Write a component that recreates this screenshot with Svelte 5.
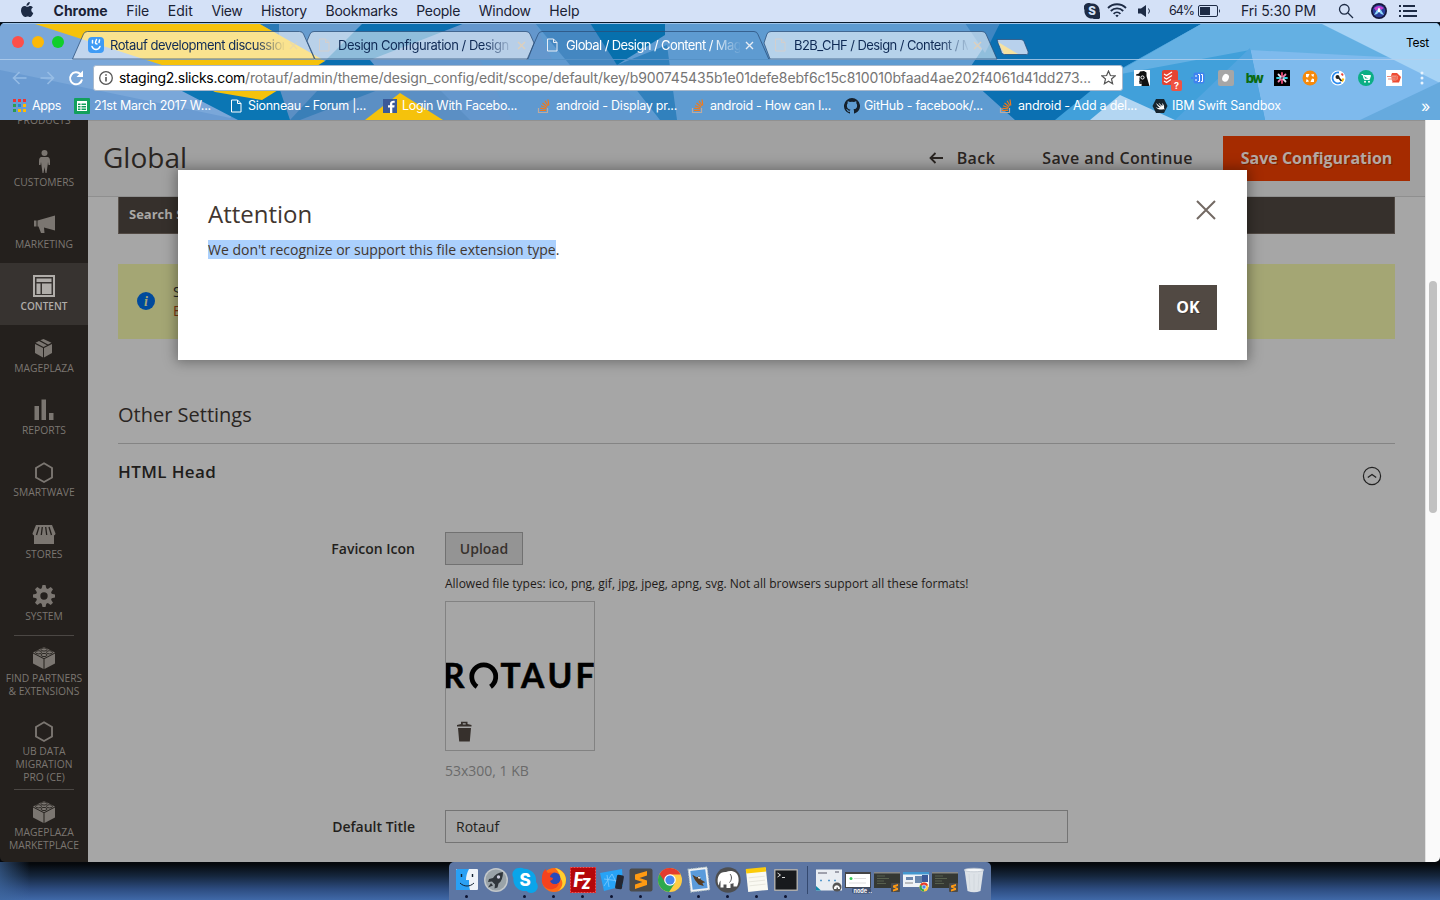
<script>
  function fit(node, width) {
    const n = node.textContent.length;
    const natural = node.getBoundingClientRect().width;
    node.style.letterSpacing = (width - natural) / n + 'px';
  }

  const menus = [['Chrome', 54], ['File', 23], ['Edit', 25], ['View', 31], ['History', 46], ['Bookmarks', 72], ['People', 44], ['Window', 52], ['Help', 30]];
  const tabs = [
    { t: 'Rotauf development discussion', w: 179, icon: 'smile' },
    { t: 'Design Configuration / Design /', w: 178, icon: 'doc' },
    { t: 'Global / Design / Content / Mage', w: 182, icon: 'doc', active: true },
    { t: 'B2B_CHF / Design / Content / M', w: 179, icon: 'doc' }
  ];
  const marks = [
    ['sheet', '21st March 2017 W...', 117], ['doc', 'Sionneau - Forum |...', 118], ['fb', 'Login With Facebo...', 115],
    ['so', 'android - Display pr...', 121], ['so', 'android - How can I...', 121], ['gh', 'GitHub - facebook/...', 119],
    ['so', 'android - Add a del...', 119], ['swift', 'IBM Swift Sandbox', 109]
  ];
  const exts = ['ghost', 'todo', 'brace', 'grey', 'bw', 'slack', 'orange', 'ring', 'cart', 'dash'];
  const nav = [
    { l: ['CUSTOMERS'], i: 'person' }, { l: ['MARKETING'], i: 'horn' }, { l: ['CONTENT'], i: 'layout', on: true },
    { l: ['MAGEPLAZA'], i: 'box' }, { l: ['REPORTS'], i: 'bars' }, { l: ['SMARTWAVE'], i: 'hex' },
    { l: ['STORES'], i: 'store' }, { l: ['SYSTEM'], i: 'gear' },
    { l: ['FIND PARTNERS', '& EXTENSIONS'], i: 'brick', line: true, h: 73 },
    { l: ['UB DATA', 'MIGRATION', 'PRO (CE)'], i: 'hex', h: 81 },
    { l: ['MAGEPLAZA', 'MARKETPLACE'], i: 'brick', line: true, h: 73 }
  ];
  const dock = ['finder', 'rocket', 'skype', 'firefox', 'filezilla', 'xcode', 'sublime', 'chrome', 'mail', 'mamp', 'notes', 'term'];
  const mini = ['win1', 'win2', 'win3', 'win4', 'win5', 'trash'];
  const dotless = ['rocket'];
</script>

{#snippet small(name)}
  <svg class="ic16" viewBox="0 0 16 16" width="16" height="16">
    {#if name === 'smile'}
      <rect width="16" height="16" rx="4" fill="#3f9bf5" /><path d="M4.500 3.500v2.500M8.500 2.500c-1.500 3-1.500 4.500.5 4.500M11.500 3l-.5 2.500M4 9.500c1.500 4 6.500 4 8 0" stroke="#fff" stroke-width="1.500" fill="none" stroke-linecap="round" />
    {:else if name === 'doc'}
      <path d="M3.500 2h6l3.500 3.500v8.500h-9.500zM9.500 2v3.500H13" fill="none" stroke="currentColor" stroke-width="1" />
    {:else if name === 'sheet'}
      <rect width="16" height="16" rx="1" fill="#12a05c" /><rect x="3" y="3" width="10" height="10" fill="#fff" /><path d="M4 6.300h2.500M7.500 6.300h4.500M4 8.800h2.500M7.500 8.800h4.500M4 11.300h2.500M7.500 11.300h4.500" stroke="#12a05c" stroke-width="1.500" />
    {:else if name === 'fb'}
      <rect x="1" y="1" width="14" height="14" fill="#3b5998" /><path d="M10.300 15V9.500h2l.3-2.300h-2.300V6c0-.8.3-1.200 1.200-1.200h1.200V2.700C10 2.400 8 3.200 8 5.700v1.500H6v2.300h2V15z" fill="#fff" />
    {:else if name === 'so'}
      <path d="M2.500 10v4.500h9V10" fill="none" stroke="#bcaaa0" stroke-width="1.200" /><path d="M4 12.500h6M4.200 10.300l6 .6M5 7.800l5.500 2M6.500 5l4.600 3.800M9 2.800l3 5M12 1.500l.8 6" stroke="#ee7a1c" stroke-width="1.200" />
    {:else if name === 'gh'}
      <path fill="#15202b" d="M8 0a8 8 0 0 0-2.500 15.600c.4 0 .5-.2.5-.4v-1.500c-2.200.5-2.700-1-2.700-1-.4-.9-.9-1.200-.9-1.200-.7-.5.1-.5.100-.5.800.1 1.200.8 1.200.8.700 1.300 1.900.9 2.300.7.100-.5.300-.9.500-1.100-1.800-.2-3.600-.9-3.600-4 0-.9.300-1.600.8-2.100 0-.2-.3-1 .1-2.100 0 0 .7-.2 2.200.8a7.500 7.500 0 0 1 4 0c1.500-1 2.200-.8 2.200-.8.400 1.100.1 1.900.1 2.100.5.600.8 1.300.8 2.200 0 3.100-1.900 3.700-3.700 3.900.300.3.600.800.600 1.500v2.300c0 .2.100.5.500.4A8 8 0 0 0 8 0z" />
    {:else if name === 'swift'}
      <path d="M4 1h8l3.500 7-3.500 7H4L.5 8z" fill="#16252f" /><path d="M4 5c2 2 4 3.200 5.500 3.800C8.500 7.800 7 6 6.500 4.800 8.500 6.500 9.500 7.300 10.500 8c.2-1 0-2-.7-3 2 1.300 2.700 3.300 2.200 5 .5.600.6 1.200.4 1.700-.6-.8-1.300-.5-2-.3C8 12 5 11 3.700 9c1.500 1 3 1.200 4 .8C6.200 8.500 5 7 4 5z" fill="#fff" />
    {:else if name === 'ghost'}
      <rect width="16" height="16" fill="#fff" /><path d="M2 4.500l3-1 1-2 4-.5 2.500 1.500V6l3 10H7.500L8 11H5.500V8L6 6 2 5.500z" fill="#111" /><circle cx="8.500" cy="7.500" r="1.600" fill="none" stroke="#fff" /><path d="M5 11h3v3H5.500z" fill="#333" />
    {:else if name === 'todo'}
      <rect width="16" height="15" rx="2" fill="#e44332" /><path d="M2 4l2.500 1.500L10 2M2 7.500L4.500 9 10 5.500M2 11l2.500 1.500L9 9.500" stroke="#fff" fill="none" stroke-width="1.200" />
    {:else if name === 'brace'}
      <rect x="3.500" y="2.500" width="11" height="11" rx="2" fill="#3f83f0" /><path d="M1 8h2" stroke="#3f83f0" stroke-width="2" /><path d="M6 5v2M6 9v2M8 4.500h1.500v7H8M11 4.500h1.500v7H11" stroke="#fff" fill="none" />
    {:else if name === 'grey'}
      <rect width="16" height="16" rx="2" fill="#a6a6a6" /><ellipse cx="7.500" cy="8" rx="3.200" ry="4" fill="#fff" transform="rotate(25 8 8)" />
    {:else if name === 'slack'}
      <rect width="16" height="16" fill="#000" /><g stroke-width="1.800" stroke-linecap="round"><path d="M8 3v3.500M8 9.500V13" stroke="#ec4c78" /><path d="M3 8h3.500M9.500 8H13" stroke="#33d0e0" /><path d="M4.500 4.500l2.300 2.300M9.200 9.200l2.300 2.300" stroke="#e5e0ee" /><path d="M11.500 4.500L9.200 6.800M6.800 9.200l-2.300 2.300" stroke="#ef7fb1" /></g>
    {:else if name === 'orange'}
      <circle cx="8" cy="8" r="7.500" fill="#f58a0c" /><g fill="#fff"><path d="M4 4h3.500L6 7.500 4 7zM12 12H8.500L10 8.500l2 .5zM9 4.500l3-.5-.5 3-1.500-1zM7 11.500L4 12l.5-3L6 10z" /></g>
    {:else if name === 'ring'}
      <circle cx="8" cy="8" r="7.500" fill="#fff" /><path d="M9 2.500a5.500 5.500 0 1 0 2 10" fill="none" stroke="#2c8cf0" stroke-width="1.800" /><path d="M11.500 3.500l1.500 2" stroke="#e94335" stroke-width="1.800" /><path d="M13.500 8.500l-1.500 3" stroke="#fbbc05" stroke-width="2" /><circle cx="7.500" cy="7" r="2" fill="#222" /><path d="M8 7l3.500 4" stroke="#222" stroke-width="1.800" />
    {:else if name === 'cart'}
      <circle cx="8" cy="8" r="8" fill="#0cae84" /><path d="M3.500 4.500h1.500l1.500 5h5M5.500 5.500h7l-1 3.500h-5z" stroke="#fff" fill="#fff" stroke-width="1" /><circle cx="7" cy="11.700" r="1" fill="#fff" /><circle cx="11" cy="11.700" r="1" fill="#fff" />
    {:else if name === 'dash'}
      <rect width="16" height="16" fill="#fff" /><path d="M6 3h5l4 4-2 5.500H6l1-2.500h4l1-3-1.500-1.500H5z" fill="#ee4b33" /><path d="M5 5h6l1 3-2 3H6z" fill="#f0705a" /><path d="M1 6.500h9M2 9h7" stroke="#ee8a78" stroke-width="1.200" />
    {/if}
  </svg>
{/snippet}

{#snippet side(name)}
  <svg viewBox="0 0 24 24" width="24" height="24" fill="currentColor">
    {#if name === 'person'}
      <circle cx="12.500" cy="3" r="3" /><path d="M9.500 7h6c1.500 0 2.500 1.500 2.500 4v4h-1.500l-.5-3-.2 2L14.500 23h-1l-1-6-1 6h-1L9.300 14 9 12l-.5 3H7v-4c0-2.500 1-4 2.500-4z" />
    {:else if name === 'horn'}
      <path d="M2 8.500h2.500v6H2zM5.500 8.500L23 3.500v15L12 15.500l.5 5.500H9l-2.500-6.500h-1z" />
    {:else if name === 'layout'}
      <path fill-rule="evenodd" d="M1 1h22v22H1zM3 3v18h18V3z" /><path d="M4.500 4.500h15v3.500h-15zM4.500 9.500h4V20h-4zM10 9.500h9.500V20H10z" />
    {:else if name === 'box'}
      <path d="M3 8l8 4v9.500l-8-4.500zM20 8l-8 4v9.500l8-4.500zM3.500 6.800L7 5l8 4.200-3.500 1.700zM8.300 4.300L11.500 3l8 3.800L16 8.500z" />
    {:else if name === 'bars'}
      <path d="M2.500 8h4.500v14H2.500zM9.500 1.500H14V22H9.500zM17 15h4.500v7H17z" />
    {:else if name === 'hex'}
      <path d="M12 3.300l8 4.700v9.500L12 22l-8-4.500V8z" fill="none" stroke="currentColor" stroke-width="1.900" />
    {:else if name === 'store'}
      <path d="M2 13h20v9H2z" /><path d="M4 3h16l3.500 8.500c0 1.300-1 2-2 2h-19c-1 0-2-.7-2-2z" /><path d="M7 5l-2.500 8M10.300 5l-1 8M13.700 5l1 8M17 5l2.500 8" stroke="#24201d" stroke-width="1.300" />
    {:else if name === 'gear'}
      <path fill-rule="evenodd" d="M10.500 1h3l.8 3.300 1.500.6L18.700 3 21 5.300l-1.900 2.900.6 1.500L23 10.500v3l-3.300.8-.6 1.500 1.900 2.900-2.300 2.300-2.900-1.900-1.500.6-.8 3.300h-3l-.8-3.300-1.500-.6L5.300 21 3 18.700l1.900-2.900-.6-1.500L1 13.500v-3l3.300-.8.6-1.500L3 5.300 5.300 3l2.900 1.900 1.500-.6zM12 8.300a3.700 3.700 0 1 0 0 7.400 3.700 3.700 0 0 0 0-7.400z" />
    {:else if name === 'brick'}
      <path d="M1 7.500l10.500 5.500v10L1 17.500zM23 7.500L12.500 13v10L23 17.500zM12 1l11 5.500-11 5.700L1 6.500z" /><g fill="currentColor" stroke="#24201d" stroke-width=".9"><ellipse cx="12" cy="3.500" rx="3" ry="1.600" /><ellipse cx="6.500" cy="6.300" rx="3" ry="1.600" /><ellipse cx="17.500" cy="6.300" rx="3" ry="1.600" /><ellipse cx="12" cy="9" rx="3" ry="1.600" /></g>
    {/if}
  </svg>
{/snippet}

{#snippet app(name)}
  <svg viewBox="0 0 28 28" width="28" height="28">
    {#if name === 'finder'}
      <rect x="3" y="3" width="22" height="21" rx="1" fill="#eef3f8" /><path d="M4 3h12c-2 4-3 7-3 11h3c0 4 0 7 1 10H3V4z" fill="#2aa0f4" /><path d="M8.500 8v3M19.500 8v3" stroke="#123" stroke-width="1.400" /><path d="M7 17c4 4 10 4 14 0" stroke="#123" fill="none" />
    {:else if name === 'rocket'}
      <circle cx="14" cy="14" r="12" fill="#c3c8cb" /><circle cx="14" cy="14" r="10.500" fill="#9aa3a8" /><path d="M21 6c-5 .5-8 3-10 6l-4 1-1 3 4-.5 3 3-.5 4 3-1 1-4c3-2 4.500-6 4.500-11.500zM9 17l-3 4.500 5-2z" fill="#30363b" /><circle cx="16.500" cy="11" r="1.700" fill="#ccd" />
    {:else if name === 'skype'}
      <path d="M8 2a7 7 0 0 1 5 .8A11.500 11.500 0 0 1 25 16a6.500 6.500 0 0 1-9.500 9A11.500 11.500 0 0 1 2.500 12 6.500 6.500 0 0 1 8 2z" fill="#0aa5ea" /><text x="14" y="20" text-anchor="middle" font-family="Inter, sans-serif" font-size="17" font-weight="800" fill="#fff">S</text>
    {:else if name === 'firefox'}
      <circle cx="14" cy="14" r="12" fill="#ff6a17" /><path d="M15 2c6 1 11 6 11 12a12 12 0 0 1-8 11c6-5 5-10 2-13 0-4-2-7-5-10z" fill="#ffd02f" /><circle cx="14.500" cy="12.500" r="6" fill="#2b4ab8" /><path d="M2 12C2 7 4 4 6 3c0 2 1 3 2 4 2-1 4-.5 5 0-2 1-3 3-3 4l3 1c0 2-2 2.500-3 3 2 4 6 4 9 2-1 5-6 7-10 6-5-1-8-6-7-11z" fill="#f5421e" />
    {:else if name === 'filezilla'}
      <rect x="1" y="1" width="26" height="26" fill="#b5070a" /><rect x="1.500" y="1.500" width="25" height="25" fill="none" stroke="#e55" stroke-dasharray="2 1" /><text x="4" y="21" font-family="Lato, sans-serif" font-size="21" font-weight="900" font-style="italic" fill="#fff">F</text><text x="13" y="23" font-family="Lato, sans-serif" font-size="20" font-weight="900" font-style="italic" fill="#fff">z</text>
    {:else if name === 'xcode'}
      <path d="M2 7l22-4 1 17-19 5z" fill="#27a3f6" /><path d="M6 20l8-12 6 12M6 13l15 2M9 9l2 12" stroke="#7fcaff" fill="none" stroke-width=".8" /><rect x="18" y="9" width="7" height="14" rx="1.500" fill="#232630" transform="rotate(10 21 16)" />
    {:else if name === 'sublime'}
      <rect x="2.500" y="2.500" width="23" height="23" rx="2" fill="#4b4b4b" /><path d="M8 8.500L20 5v4.500L12.500 12 20 14.500V19L8 23v-4.500l7.500-2.500L8 13.500z" fill="#ff9a12" />
    {:else if name === 'chrome'}
      <circle cx="14" cy="14" r="12" fill="#fc4" /><path d="M14 14L3.600 8A12 12 0 0 0 13 26l6-9z" fill="#2da94f" /><path d="M14 8.500h10.600A12 12 0 0 0 3.600 8L9 16z" fill="#e33b2e" /><circle cx="14" cy="14" r="5.800" fill="#fff" /><circle cx="14" cy="14" r="4.600" fill="#4787ee" />
    {:else if name === 'mail'}
      <g transform="rotate(-7 14 14)"><rect x="4.500" y="2" width="19" height="23" fill="#f2f3f5" stroke="#bcc" stroke-dasharray="1.500 1" /><rect x="6.500" y="4" width="15" height="19" fill="#5a9bdb" /><path d="M8 8l4 3 2.500-1 1.500 4 4 3-3 .5 1 3-5-2-3-5z" fill="#553c22" /><path d="M13 10l3 2-2 1z" fill="#fff" /></g>
    {:else if name === 'mamp'}
      <circle cx="14" cy="14" r="12.700" fill="#4d4e50" /><path d="M4 18c-1.500-8 2-12.500 8-12 5-2.500 12-.5 12.500 6 .5 4-.5 6-1.500 8.500h-3.500V17c-1 .7-2 .8-3 .8V22h-4v-3.500H9.500v3H6.500v-7c-1 1-1.500 3-1.500 5z" fill="#fff" /><path d="M16 8c2 2 2 6-.5 8.500" stroke="#4d4e50" fill="none" />
    {:else if name === 'notes'}
      <g transform="rotate(-6 14 14)"><rect x="4" y="3" width="20" height="22" fill="#faf9f2" /><rect x="4" y="2" width="20" height="4.500" fill="#fccb0a" /><path d="M6 11h16M6 15h16M6 19h16" stroke="#e0ded4" stroke-width=".7" /></g>
    {:else if name === 'term'}
      <rect x="2" y="3" width="24" height="22" rx="1" fill="#aaa" /><rect x="3.500" y="4.500" width="21" height="19" fill="#181a1d" /><path d="M5.500 7l3 2-3 2M10 11.500h3" stroke="#ddd" fill="none" />
    {:else if name === 'win1'}
      <rect x="1" y="3.500" width="26" height="21" fill="#e9edf2" /><path d="M3 7h9M20 6h4" stroke="#556" /><path d="M5 14.500h2M13 14.500h2M19 14.500h2" stroke="#59c" stroke-width="1.500" /><path d="M1 20l5 4.500H1z" fill="#18a" /><circle cx="22" cy="21" r="4.500" fill="#555" /><path d="M19 23c-.5-5 6-5 6 0h-2v-1.500h-1.500V23z" fill="#fff" />
    {:else if name === 'win2'}
      <rect x="1" y="6" width="26" height="16" fill="#444" /><rect x="2" y="8" width="24" height="13" fill="#fff" /><circle cx="7" cy="12.500" r="1.500" fill="#3c5" /><path d="M10 12.500h12M5 17h17" stroke="#ddd" /><rect x="8" y="21.500" width="19" height="6" rx="2" fill="#425273" /><text x="9.500" y="26.500" font-family="Inter, sans-serif" font-size="5.500" font-weight="700" fill="#fff">node ...</text>
    {:else if name === 'win3' || name === 'win5'}
      <rect x="1" y="6" width="26" height="16" fill="#353833" /><rect x="1" y="6" width="26" height="1.500" fill="#888" /><path d="M4 10h8M4 12.500h12M4 15h7M4 17.500h9" stroke="#66715a" stroke-width=".7" /><rect x="18" y="17" width="9" height="9" rx="1" fill="#4b4b4b" /><path d="M20 19.500l5-1.500v2l-3 1 3 1v2l-5 1.500v-2l3-1-3-1z" fill="#ff9a12" />
    {:else if name === 'win4'}
      <rect x="1" y="6" width="26" height="15" fill="#eef2f7" /><rect x="1" y="6" width="26" height="2.500" fill="#4297d0" /><path d="M4 11h7v3H4zM13 10h7v7h-7z" fill="#6886ad" /><path d="M3 17h8" stroke="#888" /><rect x="20" y="9" width="6" height="7" fill="#3b5998" /><circle cx="22" cy="21" r="4.500" fill="#fc4" /><path d="M22 21l-4-2a4.500 4.500 0 0 1 8 0z" fill="#e33b2e" /><path d="M22 21l-4-2a4.500 4.500 0 0 0 4 6.500z" fill="#2da94f" /><circle cx="22" cy="21" r="2" fill="#4787ee" stroke="#fff" stroke-width=".6" />
    {:else if name === 'trash'}
      <path d="M4.500 3.500h19L20.500 25q-6.500 2.500-13 0z" fill="#dde2e7" /><ellipse cx="14" cy="4" rx="9.700" ry="1.800" fill="#f4f6f8" stroke="#b9c2cc" stroke-width=".7" /><path d="M9 8l1 16M14 8v16M19 8l-1 16" stroke="#cfd6dc" stroke-width=".8" />
    {/if}
  </svg>
{/snippet}

<div class="desktop">
  <div class="menubar">
    <svg class="apple" viewBox="0 0 14 16" width="14" height="16"><path fill="#1d2b45" d="M9.800 0c.1 1-.3 2-.9 2.700-.6.700-1.500 1.200-2.400 1.100-.1-1 .3-2 .9-2.600C8 .5 9 .1 9.800 0zM12.900 5.400c-1 .6-1.600 1.500-1.600 2.600 0 1.300.7 2.400 2 2.900-.7 2-2 4-3.300 4-.9 0-1.200-.5-2.300-.5s-1.500.5-2.300.5C3.500 15 1 11.500 1 8.400 1 5.500 2.900 4 4.600 4c1.100 0 2 .8 2.800.8.700 0 1.700-.8 3-.8.500 0 1.800.1 2.500 1.400z" /></svg>
    {#each menus as [m, w], i}
      <span class:strong={i === 0} use:fit={w}>{m}</span>
    {/each}
    <div class="status">
      <svg width="16" height="16" viewBox="0 0 16 16"><path d="M4 0a5 5 0 0 1 3 .5A7.500 7.500 0 0 1 15.500 9 4.500 4.500 0 0 1 9 15.500 7.500 7.500 0 0 1 .5 7 4.500 4.500 0 0 1 4 0z" fill="#1d2b45" /><text x="8" y="12" text-anchor="middle" font-size="11.500" font-weight="800" fill="#d5e2f7">S</text></svg>
      <svg class="wifi" width="20" height="15" viewBox="0 0 20 15" fill="none" stroke="#1d2b45" stroke-width="1.800"><path d="M1 5c5-5 13-5 18 0M3.800 8c3.500-3.500 9-3.500 12.400 0M6.600 10.800c2-2 4.800-2 6.800 0" /><path d="M8.300 12.500L10 14.300l1.700-1.800q-1.700-1.300-3.400 0z" fill="#1d2b45" stroke="none" /></svg>
      <svg class="vol" width="14" height="12" viewBox="0 0 14 12"><path d="M0 3.500h3L8 0v12L3 8.500H0z" fill="#1d2b45" /><path d="M10.500 3.500q2 2.500 0 5" stroke="#1d2b45" fill="none" /></svg>
      <span class="pct" use:fit={25}>64%</span>
      <svg class="bat" width="23" height="12" viewBox="0 0 23 12"><rect x=".5" y=".5" width="19" height="11" rx="1.500" fill="none" stroke="#1d2b45" /><rect x="2" y="2" width="10" height="8" fill="#1d2b45" /><path d="M21 4q2 2 0 4z" fill="#1d2b45" /></svg>
      <span class="clock" use:fit={75}>Fri 5:30 PM</span>
      <svg class="find" width="16" height="16" viewBox="0 0 16 16" fill="none" stroke="#1d2b45" stroke-width="1.300"><circle cx="6.300" cy="6.300" r="4.800" /><path d="M10 10l5 5" /></svg>
      <svg class="siri" width="16" height="16" viewBox="0 0 16 16"><circle cx="8" cy="8" r="8" fill="#15173c" /><circle cx="8" cy="8" r="6.300" fill="#2b3f9b" /><path d="M3 5q5-4 10 0l-3 2-2-2-3 3z" fill="#c23fd0" /><path d="M3 12l3-5 2-2 2 2 3 5-3-1-2-2-2 2z" fill="#8fd8fa" /><path d="M7 6l1-1.500L9 6v3H7z" fill="#fff" /></svg>
      <svg class="list" width="18" height="12" viewBox="0 0 18 12" stroke="#1d2b45" stroke-width="1.800"><path d="M0 1h2M4 1h12M0 6h2M4 6h14M0 11h2M4 11h14" /></svg>
    </div>
  </div>

  <div class="window">
    <div class="chrome">
      <svg class="art" viewBox="0 23 1440 97" width="1440" height="97">
        <rect y="23" width="1440" height="97" fill="#5e9bd1" />
        <path d="M0 23h260L230 120H0z" fill="#7aa7d9" />
        <path d="M0 120V70l240 50z" fill="#6a9bd2" />
        <path d="M258 23h21v38l46 0z" fill="#2a79b5" />
        <path d="M279 23h84l-38 38-46-12z" fill="#679ccf" />
        <path d="M363 23h105L385 66h-72l12-5z" fill="#0b6fb0" />
        <path d="M465 23h70l45 97H420l-50-60z" fill="#6497cd" />
        <path d="M180 90h200l-60 30h-82z" fill="#0b76b4" />
        <path d="M280 90h160l30 30h-180z" fill="#5b8fc4" />
        <path d="M318 90h60l-78 30h-10z" fill="#3a7fb8" />
        <path d="M480 60l110 0 70 60H512z" fill="#5f99d0" />
        <path d="M535 23h55l30 42-50 0z" fill="#4487c1" />
        <path d="M590 23h75v12l-48 30z" fill="#0770ad" />
        <path d="M617 65l50-20 10 75h-17z" fill="#3181bd" />
        <path d="M32 23h226l67 38-63 39-47-8-50-26z" fill="#f5c20c" />
        <path d="M365 120l35-27 43 27z" fill="#f5c20c" />
        <path d="M1000 23h203l-93 52-50 45h-45l-50-45z" fill="#0b70b2" />
        <path d="M965 23h35l-15 30z" fill="#3f86c2" />
        <path d="M1203 23h47l15 97H1055l55-45z" fill="#41a0da" />
        <path d="M1250 48l190-10v82h-175z" fill="#7ebaed" />
        <path d="M1203 23h117l120 37-190-10-140 26z" fill="#64b0e3" />
        <path d="M1250 48l15 72h-90z" fill="#52a5df" />
        <path d="M1320 23h120v60z" fill="#a6d3f5" />
        <path d="M1360 120l80-38v38z" fill="#66aade" />
        <path d="M1090 120l30-25 55 25z" fill="#b3d6f2" />
        <path d="M0 23.500h1440" stroke="#9dc3e8" />
        <path d="M0 59.500H1440" stroke="#b4d0ec" stroke-opacity=".8" />
        <g stroke="#2a4e78" stroke-opacity=".75">
          <path d="M72.500 59l11-25q1-2.500 4-2.500h212q3 0 4 2.500l11 25z" fill="#fff" fill-opacity=".54" />
          <path d="M315 59l-8-18 3-7q1-2.500 4-2.500h212q3 0 4 2.500l4 9-6 16z" fill="#fff" fill-opacity=".54" />
          <path d="M764 43l3-9q1-2.500 4-2.500h211q3 0 4 2.500l11 25H770z" fill="#fff" fill-opacity=".55" />
          <path d="M527 59.500l11-25q1-3 4-3h212q3 0 4 3l11 25" fill="none" />
          <path d="M997 39.500h24q2 0 3 2l4 10q1 3-1.500 3h-22q-2 0-3-2z" fill="#b8d1ec" />
        </g>
        <path d="M528 59.500h242" stroke="#5591c6" />
        <path d="M998 42l20 12h-14z" fill="#f7e2a0" />
      </svg>
      <div class="tabrow">
        <div class="lights"><i class="r"></i><i class="y"></i><i class="g"></i></div>
        {#each tabs as t}
          <div class="tab" class:active={t.active}>
            {@render small(t.icon)}
            <span class="clip"><span use:fit={t.w}>{t.t}</span></span>
            <svg class="x" width="9" height="9" viewBox="0 0 9 9"><path d="M1 1l7 7M8 1L1 8" stroke="currentColor" stroke-width="1.400" /></svg>
          </div>
        {/each}
        <span class="profile" use:fit={23}>Test</span>
      </div>
      <div class="toolbar">
        <svg class="arrows" width="80" height="18" viewBox="0 0 80 18" fill="none" stroke-width="1.600"><path d="M15 9H2M8 3L2 9l6 6M29 9h13M36 3l6 6-6 6" stroke="#9fc3e8" stroke-opacity=".8" /><g transform="translate(-3 0)"><path d="M72 5.200A6 6 0 1 0 73.500 10.500" stroke="#fff" stroke-width="2" /><path d="M68 8h6.500V1.500z" fill="#fff" /></g></svg>
        <div class="url">
          <svg width="14" height="14" viewBox="0 0 14 14" fill="none" stroke="#555"><circle cx="7" cy="7" r="6.300" stroke-width="1.300" /><path d="M7 6v4.500M7 3.300v1.500" stroke-width="1.600" /></svg>
          <span class="host" use:fit={126}>staging2.slicks.com</span><span class="path" use:fit={846}>/rotauf/admin/theme/design_config/edit/scope/default/key/b900745435b1e01defe8ebf6c15c810010bfaad4ae202f4061d41dd273...</span>
          <svg class="star" width="15" height="15" viewBox="0 0 15 15"><path d="M7.500 1l1.900 4.500 4.700.4-3.600 3.100 1.100 4.700-4.100-2.500-4.100 2.500L4.500 9 .9 5.900l4.700-.4z" fill="none" stroke="#555" stroke-width="1.200" /></svg>
        </div>
        <div class="exts">
          {#each exts as e}
            <div class="ext">
              {#if e === 'bw'}<b class="bw">bw</b>{:else}{@render small(e)}{/if}
              {#if e === 'todo'}<b class="badge">?</b>{/if}
            </div>
          {/each}
          <div class="ext"><svg width="4" height="16" viewBox="0 0 4 16" fill="#e8f3fd"><circle cx="2" cy="3" r="1.500" /><circle cx="2" cy="8" r="1.500" /><circle cx="2" cy="13" r="1.500" /></svg></div>
        </div>
      </div>
      <div class="marks">
        <div class="apps">
          <svg width="13" height="13" viewBox="0 0 13 13"><g fill="#e33"><path d="M0 0h3v3H0zM5 0h3v3H5zM10 0h3v3h-3z" /></g><path d="M0 5h3v3H0z" fill="#2a9e50" /><path d="M5 5h3v3H5z" fill="#28c" /><path d="M10 5h3v3h-3zM5 10h3v3H5zM10 10h3v3h-3z" fill="#fb0" /><path d="M0 10h3v3H0z" fill="#2a9e50" /></svg>
          <span use:fit={29}>Apps</span>
        </div>
        {#each marks as [i, t, w]}
          <div class="mark">{@render small(i)}<span use:fit={w}>{t}</span></div>
        {/each}
        <span class="more">»</span>
      </div>
    </div>

    <div class="page">
      <nav>
        <div class="cut">PRODUCTS</div>
        {#each nav as n}
          <div class="item" class:on={n.on} class:line={n.line} style:height="{n.h ?? 62}px">
            {@render side(n.i)}
            <div class="lab">{#each n.l as l}<div>{l}</div>{/each}</div>
          </div>
        {/each}
      </nav>
      <main>
        <header>
          <h1>Global</h1>
          <div class="acts">
            <span class="back"><svg width="14" height="12" viewBox="0 0 14 12" fill="none" stroke="#2a2522" stroke-width="1.800"><path d="M14 6H1.500M6.500 1l-5 5 5 5" /></svg>Back</span>
            <span class="cont">Save and Continue</span>
            <span class="save">Save Configuration</span>
          </div>
        </header>
        <div class="body">
          <div class="search">Search Store</div>
          <div class="notice">
            <svg width="18" height="18" viewBox="0 0 18 18"><circle cx="9" cy="9" r="9" fill="#004a9c" /><text x="9" y="13.500" text-anchor="middle" font-family="'Liberation Serif', serif" font-size="14" font-style="italic" font-weight="700" fill="#a5a776">i</text></svg>
            <div><p>Some</p><p class="err">Email</p></div>
          </div>
          <h2>Other Settings</h2>
          <div class="section">
            <h3>HTML Head</h3>
            <svg width="20" height="20" viewBox="0 0 20 20" fill="none" stroke="#222"><circle cx="10" cy="10" r="8.600" stroke-width="1.200" /><path d="M5.800 11.600L10 8.500l4.200 3.100" stroke-width="1.300" /></svg>
          </div>
          <div class="row">
            <label for="up">Favicon Icon</label>
            <div class="field">
              <button id="up">Upload</button>
              <p class="note">Allowed file types: ico, png, gif, jpg, jpeg, apng, svg. Not all browsers support all these formats!</p>
              <div class="preview">
                <svg width="148" height="148" viewBox="0 0 148 148">
                  <g font-family="Lato, sans-serif" font-weight="700" font-size="33.500" fill="#000" stroke="#000" stroke-width=".5">
                    <text x="-3" y="86">R</text>
                    <text x="54.500" y="86">T</text>
                    <text x="75" y="86">A</text>
                    <text x="101.500" y="86">U</text>
                    <text x="129.500" y="86">F</text>
                  </g>
                  <path d="M31 84.700a12 12 0 1 1 13.500 0" fill="none" stroke="#000" stroke-width="4.800" />
                  <g fill="#36302c"><path d="M11 124.500V123l4-1v-2.200h6.500v2.200l4 1v1.500zM16.800 121.300v1.200h2.900v-1.200zM12 126h13l-1.200 13.500H13.200z" /></g>
                </svg>
              </div>
              <p class="size">53x300, 1 KB</p>
            </div>
          </div>
          <div class="row title">
            <label for="ti">Default Title</label>
            <div class="input" id="ti">Rotauf</div>
          </div>
        </div>
      </main>
      <div class="scroll"><i></i></div>
    </div>
  </div>

  <div class="modal">
    <div class="mhead">
      <h4>Attention</h4>
      <svg width="20" height="20" viewBox="0 0 20 20"><path d="M1 1l18 18M19 1L1 19" stroke="#736963" stroke-width="2" /></svg>
    </div>
    <p><mark>We don't recognize or support this file extension type</mark>.</p>
    <span class="ok">OK</span>
  </div>

  <div class="dock">
    {#each dock as d}
      <div class="app">{@render app(d)}{#if !dotless.includes(d)}<i></i>{/if}</div>
    {/each}
    <div class="sep"></div>
    {#each mini as d}
      <div class="app">{@render app(d)}</div>
    {/each}
  </div>
</div>

<style>
  :global(body) { margin: 0; }
  * { box-sizing: border-box; }
  p, h1, h2, h3, h4 { margin: 0; font-weight: 400; }
  svg { display: block; flex: none; }
  .desktop { position: relative; width: 1440px; height: 900px; overflow: hidden; display: flex; flex-direction: column; font-family: Inter, sans-serif; background: linear-gradient(#05080c 0, #05080c 864px, #15263d 876px, #2d4c80 889px, #4069a8 900px); }
  .desktop::before { content: ''; position: absolute; left: 0; top: 862px; width: 30px; height: 38px; background: linear-gradient(90deg, #3f689f, transparent); opacity: .65; }
  .menubar { height: 23px; flex: none; display: flex; align-items: center; gap: 18.600px; padding: 0 22px 1px 20px; background: #d4e1f7; color: #1a2235; font-size: 14px; border-bottom: 1px solid #0a1a2c; white-space: nowrap; }
  .apple { margin: -1px 1px 0 0; }
  .strong { font-weight: 700; }
  .status { margin-left: auto; display: flex; align-items: center; }
  .wifi { margin-left: 7px; } .vol { margin-left: 11px; }
  .pct { margin-left: 17px; font-size: 12.500px; } .bat { margin-left: 4px; }
  .clock { margin-left: 20px; } .find { margin-left: 22px; } .siri { margin-left: 17px; } .list { margin: 0 1px 0 12px; }

  .window { position: relative; height: 839px; flex: none; display: flex; flex-direction: column; border-radius: 5px; overflow: hidden; }
  .chrome { position: relative; height: 97px; flex: none; display: flex; flex-direction: column; }
  .art { position: absolute; inset: 0; }
  .tabrow { position: relative; height: 37px; display: flex; align-items: center; padding-top: 7px; font-size: 13px; color: #0f2a55; white-space: nowrap; }
  .lights { width: 88px; display: flex; gap: 8px; padding: 0 0 6px 12px; }
  .lights i { width: 12px; height: 12px; border-radius: 50%; }
  .r { background: #fd4f4a; } .y { background: #fdb908; } .g { background: #10cf2b; }
  .tab { width: 228px; display: flex; align-items: center; gap: 6px; }
  .tab :global(.ic16) { color: #d3cfcd; }
  .clip { width: 174px; overflow: hidden; line-height: 20px; mask-image: linear-gradient(90deg, #000 145px, transparent 176px); }
  .clip span, .toolbar span, .marks span { display: inline-block; }
  .x { margin: 1px 0 0 -1px; color: #ddd0bd; }
  .tab:nth-child(2) .x { opacity: .5; }
  .active { color: #fff; }
  .active :global(.ic16), .active .x { color: #e6edf5; }
  .profile { margin-left: 406px; color: #000; font-size: 12px; padding-bottom: 5px; }
  .toolbar { position: relative; height: 35px; display: flex; align-items: center; padding: 5px 0 4px 10px; }
  .arrows { width: 83px; margin-right: 0; }
  .url { width: 1030px; height: 26px; background: #fff; border-radius: 3px; border: 1px solid #a7b9cd; display: flex; align-items: center; padding: 0 0 1px 5px; font-size: 14px; white-space: nowrap; }
  .host { margin-left: 6px; color: #000; } .path { color: #757575; } .star { margin-left: 10px; }
  .exts { display: flex; margin-left: 5px; }
  .ext { position: relative; width: 28px; height: 20px; display: flex; align-items: center; justify-content: center; }
  .bw { color: #0a6a12; font: 800 13px/16px Inter, sans-serif; letter-spacing: -1.500px; }
  .badge { position: absolute; right: 2px; bottom: -3px; width: 11px; height: 11px; background: #ee5344; color: #fff; font: 700 9px/11px Inter, sans-serif; text-align: center; border-radius: 2px; }
  .marks { position: relative; height: 25px; display: flex; align-items: center; padding: 0 0 4px 13px; font-size: 12.500px; color: #fff; white-space: nowrap; }
  .apps { width: 61px; display: flex; align-items: center; gap: 6px; }
  .mark { width: 154px; display: flex; align-items: center; gap: 4px; }
  .mark span, .apps span { margin-top: -1px; }
  .more { margin-left: 115px; font-size: 16px; }

  .page { flex: 1; display: flex; min-height: 0; font-family: 'Open Sans', sans-serif; }
  nav { width: 88px; flex: none; background: #24201d; color: #7b7671; overflow: hidden; }
  .cut { height: 19px; font-size: 10.300px; display: flex; align-items: flex-start; justify-content: center; line-height: 0; }
  .item { position: relative; display: flex; flex-direction: column; align-items: center; padding-top: 11px; }
  .item.on { background: #373330; color: #b0ada9; }
  .item.line::before { content: ''; position: absolute; left: 14px; right: 14px; top: 0; height: 1px; background: #4b4744; }
  .lab { font-size: 10.300px; line-height: 13px; text-align: center; margin-top: 2px; white-space: nowrap; }
  .on .lab { font-weight: 600; font-size: 10px; }
  main { width: 1337px; background: #a6a6a6; overflow: hidden; }
  header { height: 77px; display: flex; align-items: center; justify-content: space-between; padding: 0 15px; background: #a1a1a1; border-top: 1px solid #919191; border-bottom: 1px solid #8f8f8f; }
  h1 { font-size: 28px; line-height: 36px; color: #2a2522; padding-bottom: 4px; }
  .acts { display: flex; align-items: center; font-size: 16px; font-weight: 600; color: #2a2522; letter-spacing: .4px; }
  .back { display: flex; align-items: center; gap: 14px; margin-right: 46px; padding: 0 1px 2px 0; }
  .cont { margin-right: 30px; padding-bottom: 2px; }
  .save { width: 187px; height: 45px; line-height: 44px; text-align: center; background: #a52b00; color: #b3a9a3; text-shadow: 1px 1px 0 rgba(0,0,0,.25); font-weight: 700; letter-spacing: 0; }
  .body { padding: 0 30px; }
  .search { height: 37px; background: #36302c; border: 1px solid #514943; border-top: 0; border-left-color: #5c554f; color: #aaa8a5; font-size: 13px; font-weight: 700; line-height: 35px; padding-left: 10px; }
  .notice { margin-top: 30px; height: 75px; background: #a4a674; display: flex; align-items: center; gap: 18px; padding: 0 0 2px 19px; font-size: 14px; line-height: 19px; color: #222; }
  .err { color: #7b3410; }
  h2 { margin-top: 60px; font-size: 20px; line-height: 32px; height: 45px; border-bottom: 1px solid #848484; color: #2a2522; }
  .section { height: 88px; display: flex; justify-content: space-between; padding: 16px 13px 0 0; }
  .section svg { margin-top: 6px; }
  h3 { font-size: 17px; font-weight: 600; line-height: 24px; letter-spacing: .4px; color: #201d1b; }
  .row { display: flex; }
  label { width: 297px; margin-right: 30px; text-align: right; font-size: 14px; font-weight: 600; line-height: 33px; color: #231f1c; }
  button { display: block; width: 78px; height: 33px; padding: 0; background: #949494; border: 1px solid #717171; font: 600 14px 'Open Sans', sans-serif; color: #37312d; }
  .note { font-size: 12px; line-height: 16px; margin-top: 11px; color: #1e1a18; white-space: nowrap; }
  .preview { margin-top: 9px; width: 150px; height: 150px; border: 1px solid #828282; }
  .size { margin-top: 10px; font-size: 14px; line-height: 20px; color: #6a6a6a; }
  .title { margin-top: 29px; }
  .input { width: 623px; height: 33px; border: 1px solid #747474; line-height: 31px; padding-left: 10px; font-size: 14px; color: #231f1c; }
  .scroll { width: 15px; background: #fafafa; border-left: 1px solid #e2e2e2; padding: 161px 0 0 3px; }
  .scroll i { display: block; width: 8px; height: 232px; border-radius: 4px; background: #c1c1c1; }

  .modal { position: absolute; left: 178px; top: 170px; width: 1069px; height: 190px; background: #fff; box-shadow: 0 0 12px 2px rgba(0,0,0,.35); font-family: 'Open Sans', sans-serif; padding: 28px 30px; display: flex; flex-direction: column; color: #41362f; }
  .mhead { display: flex; justify-content: space-between; height: 42px; }
  .mhead svg { margin: 2px 1px 0 0; }
  h4 { font-size: 24px; line-height: 32px; }
  .modal p { font-size: 14px; line-height: 19px; height: 45px; }
  mark { background: #abd0fd; color: inherit; }
  .ok { align-self: flex-end; width: 58px; height: 45px; background: #514943; color: #fff; font-size: 16px; font-weight: 700; line-height: 45px; text-align: center; text-shadow: 1px 1px 0 rgba(0,0,0,.25); }
  .dock { position: absolute; left: 449px; top: 862px; width: 542px; height: 38px; border-radius: 5px 5px 0 0; background: #5d76a3; display: flex; padding: 4px 0 0 3px; }
  .app { width: 29px; height: 34px; position: relative; display: flex; flex-direction: column; align-items: center; }
  .app i { width: 3px; height: 3px; border-radius: 50%; background: #0d1330; margin-top: 1px; }
  .sep { width: 1px; height: 28px; background: #34496f; margin: 0 6px 0 7px; }
</style>
